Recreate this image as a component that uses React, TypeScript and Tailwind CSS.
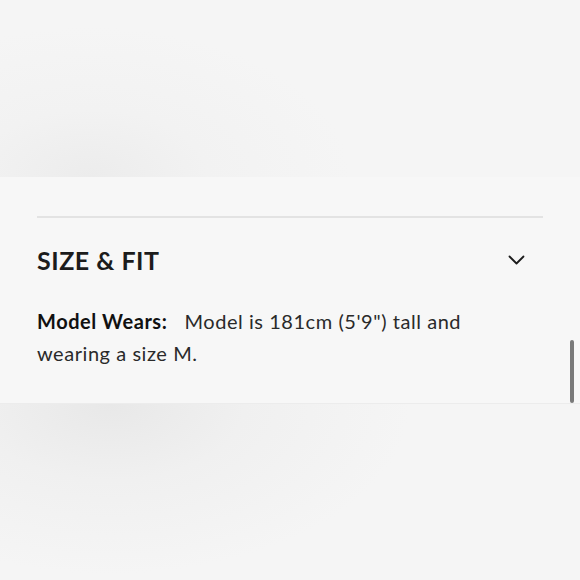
export default function App() {
  return (
    <div className="relative w-[580px] h-[580px] overflow-hidden bg-[#f6f6f6] font-['Lato','Liberation_Sans',sans-serif]">
      {/* image strip above */}
      <div className="h-[177px] bg-[radial-gradient(ellipse_260px_150px_at_90px_177px,#ececec_0%,#f2f2f2_45%,#f5f5f5_100%)]" />

      {/* accordion panel */}
      <section className="h-[226px] bg-[#f7f7f7] px-[37px] pt-[39px]">
        <div className="h-[2px] bg-[#e3e3e3]" />
        <button className="w-full flex items-center justify-between pt-[25px] pb-[28px] pr-[18px]">
          <h2 className="text-[25px] leading-[34px] font-bold text-[#1c1c1c] tracking-[0.5px]">SIZE &amp; FIT</h2>
          <svg width="17" height="10" viewBox="0 0 17 10" fill="none" stroke="#1c1c1c" strokeWidth="1.8" strokeLinecap="round" strokeLinejoin="round">
            <path d="M1.5 1.5 L8.5 8.5 L15.5 1.5" />
          </svg>
        </button>
        <p className="text-[20px] leading-[32px] text-[#2a2a2a] tracking-[0.55px] pr-[70px]">
          <span className="font-bold text-[#111]">Model Wears:</span>
          {'\u00a0\u00a0 '}Model is 181cm (5'9") tall and wearing a size M.
        </p>
      </section>

      {/* image strip below */}
      <div className="h-[177px] bg-[radial-gradient(ellipse_300px_170px_at_110px_0px,#e8e8e8_0%,#f0f0f0_45%,#f5f5f5_100%)] border-t border-[#ececec]" />

      {/* scrollbar */}
      <div className="absolute left-[570px] top-[340px] w-[4px] h-[63px] rounded-sm bg-[#7a7a7a]" />
    </div>
  );
}
